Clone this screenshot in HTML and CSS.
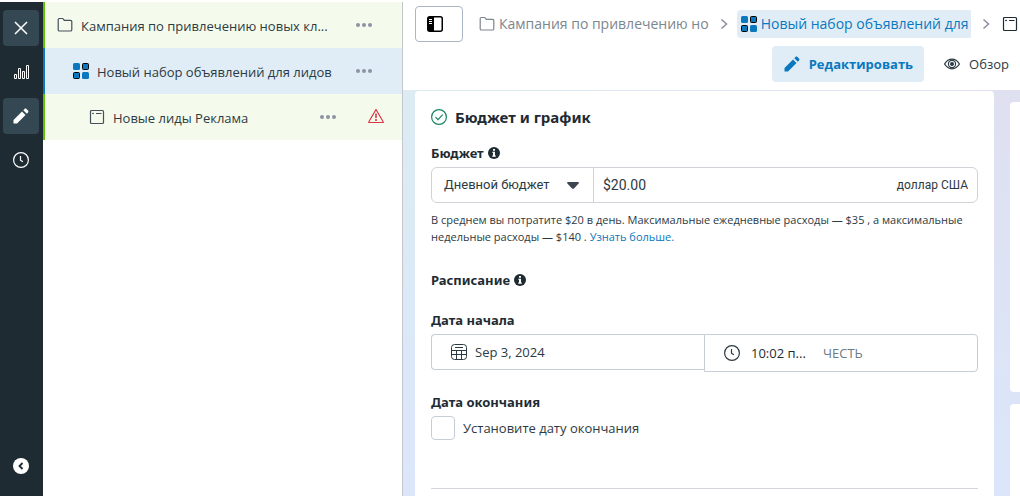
FILE: index.html
```html
<!DOCTYPE html>
<html lang="ru">
<head>
<meta charset="utf-8">
<meta name="viewport" content="width=device-width, initial-scale=1">
<title>Новый набор объявлений для лидов</title>
<link rel="stylesheet" href="styles.css">
</head>
<body>
<svg class="sprite" aria-hidden="true">
  <symbol id="folder" viewBox="0 0 16 16"><path d="M2 1.5h3.2c.5 0 .9.2 1.2.6l.9 1.2h6.2c.8 0 1.3.5 1.3 1.3v8.1c0 .8-.5 1.3-1.3 1.3h-11c-.8 0-1.3-.5-1.3-1.3V2.5c0-.6.4-1 1-1z" fill="none" stroke="currentColor" stroke-width="1.2"/></symbol>
  <symbol id="grid" viewBox="0 0 16 16"><rect x="0" y="0" width="7" height="7" rx="1.5" fill="#0a78be"/><rect x="9.5" y=".5" width="6" height="6" rx="1" fill="#0a78be" stroke="#000"/><rect x=".5" y="9.5" width="6" height="6" rx="1" fill="#0a78be" stroke="#000"/><rect x="9" y="9" width="7" height="7" rx="1.5" fill="#0a78be"/></symbol>
  <symbol id="window" viewBox="0 0 16 16"><rect x="1.5" y="1.5" width="13" height="13" rx="1" fill="none" stroke="currentColor" stroke-width="1.2"/><path d="M3.3 4.500h1.400M7 4.500h5.500M4 3.800v1.400" stroke="currentColor"/></symbol>
  <symbol id="pencil" viewBox="0 0 16 16"><path d="M.5 15.500v-3.500L9 3.500 12.500 7 4 15.500zM10.300 2.200l1.200-1.200c.6-.6 1.400-.6 2 0l1.500 1.500c.6.600.6 1.400 0 2l-1.200 1.200z" fill="currentColor"/></symbol>
  <symbol id="clock" viewBox="0 0 16 16"><circle cx="8" cy="8" r="7.400" fill="none" stroke="currentColor" stroke-width="1.200"/><path d="M7.500 4v4.200l2.400 1.500" fill="none" stroke="currentColor" stroke-width="1.200"/></symbol>
  <symbol id="chevron" viewBox="0 0 8 12"><path d="M1.500 1.500 6.500 6l-5 4.500" fill="none" stroke="currentColor" stroke-width="1.600"/></symbol>
  <symbol id="info" viewBox="0 0 12 12"><circle cx="6" cy="6" r="6" fill="currentColor"/><path d="M5 2h2v1.700H5zM4.300 4.700H7v3.800h.800v1.200H4.200V8.500H5V5.800h-.700z" fill="#fff"/></symbol>
  <symbol id="dots" viewBox="0 0 16 4"><circle cx="2" cy="2" r="2"/><circle cx="8" cy="2" r="2"/><circle cx="14" cy="2" r="2"/></symbol>
</svg>
<div class="app">
  <nav class="rail" aria-label="Разделы">
    <button class="rail-btn rail-btn-on" type="button" aria-label="Закрыть"><svg class="icon" viewBox="0 0 16 16"><path d="m2 2 12 12M14 2 2 14" stroke="currentColor" stroke-width="1.500"/></svg></button>
    <button class="rail-btn" type="button" aria-label="Графики"><svg class="icon" viewBox="0 0 16 16"><path d="M1.500 10.500h2v4h-2zM5.500 4.500h2v10h-2zM9.500 7.500h2v7h-2zM13.500 1.500h2v13h-2z" fill="none" stroke="currentColor"/></svg></button>
    <button class="rail-btn rail-btn-on" type="button" aria-label="Правка"><svg class="icon"><use href="#pencil"/></svg></button>
    <button class="rail-btn" type="button" aria-label="История"><svg class="icon"><use href="#clock"/></svg></button>
    <button class="rail-btn rail-last" type="button" aria-label="Свернуть"><svg class="icon" viewBox="0 0 16 16"><circle cx="8" cy="8" r="8" fill="#fff"/><path d="M9.500 5 6.500 8l3 3" fill="none" stroke="#1e2b33" stroke-width="1.800"/></svg></button>
  </nav>

  <aside class="tree">
    <div class="node">
      <svg class="icon"><use href="#folder"/></svg>
      <span class="node-name">Кампания по привлечению новых кл...</span>
      <button class="more" type="button" aria-label="Ещё"><svg class="dots"><use href="#dots"/></svg></button>
    </div>
    <div class="node node-2 node-on">
      <svg class="icon"><use href="#grid"/></svg>
      <span class="node-name">Новый набор объявлений для лидов</span>
      <button class="more" type="button" aria-label="Ещё"><svg class="dots"><use href="#dots"/></svg></button>
    </div>
    <div class="node node-3">
      <svg class="icon"><use href="#window"/></svg>
      <span class="node-name">Новые лиды Реклама</span>
      <button class="more" type="button" aria-label="Ещё"><svg class="dots"><use href="#dots"/></svg></button>
      <svg class="icon warn" viewBox="0 0 16 16"><path d="M8 1.500 15.300 14c.2.300 0 .500-.300.500H1c-.300 0-.500-.200-.300-.500z" fill="none" stroke="currentColor" stroke-width="1.200" stroke-linejoin="round"/><path d="M8 5.500v4.500M8 11v2" stroke="currentColor" stroke-width="1.600"/></svg>
    </div>
  </aside>

  <main class="main">
    <header class="head">
      <div class="crumbs">
        <button class="toggle" type="button" aria-label="Боковая панель"><svg class="icon" viewBox="0 0 16 16"><rect x=".75" y=".75" width="14.500" height="14.500" rx="2" fill="none" stroke="#000" stroke-width="1.500"/><path d="M1 1h6v14H1z"/><path d="M2 3.500h3M2 5.500h3M2 7.500h3" stroke="#fff"/></svg></button>
        <a class="crumb" href="#"><svg class="icon"><use href="#folder"/></svg>Кампания по привлечению но</a>
        <svg class="chev"><use href="#chevron"/></svg>
        <a class="crumb crumb-on" href="#"><svg class="icon"><use href="#grid"/></svg>Новый набор объявлений для</a>
        <svg class="chev"><use href="#chevron"/></svg>
        <a class="crumb crumb-end" href="#" aria-label="Реклама"><svg class="icon"><use href="#window"/></svg></a>
      </div>
      <div class="modes">
        <button class="mode mode-on" type="button"><svg class="icon"><use href="#pencil"/></svg>Редактировать</button>
        <button class="mode" type="button"><svg class="icon" viewBox="0 0 16 16"><path d="M.6 8C2.500 4.800 5 3.200 8 3.200S13.500 4.800 15.400 8C13.500 11.200 11 12.800 8 12.800S2.500 11.200.6 8z" fill="none" stroke="currentColor" stroke-width="1.300"/><circle cx="8" cy="8" r="3.600" fill="none" stroke="currentColor" stroke-width="1.200"/><circle cx="8" cy="8" r="2" fill="currentColor"/></svg>Обзор</button>
      </div>
    </header>

    <div class="canvas">
      <form class="card">
        <h2 class="title"><svg class="icon ok" viewBox="0 0 16 16"><circle cx="8" cy="8" r="7.400" fill="none" stroke="currentColor" stroke-width="1.200"/><path d="m4.500 8.200 2.500 2.500 4.700-5" fill="none" stroke="currentColor" stroke-width="1.200"/></svg>Бюджет и график</h2>

        <label class="label" for="budget">Бюджет <svg class="info"><use href="#info"/></svg></label>
        <div class="budget">
          <div class="pick">
            <select class="select" aria-label="Тип бюджета"><option>Дневной бюджет</option></select>
            <svg class="caret" viewBox="0 0 12 7"><path d="M1 0h10c1 0 1.200.8.600 1.400L7 6.400c-.6.600-1.400.600-2 0L.4 1.400C-.2.800 0 0 1 0z"/></svg>
          </div>
          <input class="amount" id="budget" type="text" value="$20.00">
          <span class="currency">доллар США</span>
        </div>
        <p class="hint">В среднем вы потратите $20 в день. Максимальные ежедневные расходы — <b>$35</b> , а максимальные недельные расходы — <b>$140</b> . <a class="link" href="#">Узнать больше.</a></p>

        <h3 class="label label-plan">Расписание <svg class="info"><use href="#info"/></svg></h3>

        <label class="label label-start" for="start">Дата начала</label>
        <div class="when">
          <div class="date">
            <svg class="icon" viewBox="0 0 16 16"><rect x=".5" y=".5" width="15" height="15" rx="3" fill="none" stroke="currentColor"/><path d="M4 3.500h8M.5 6.500h15M.5 10.500h15M5.500 6.500v9M10.500 6.500v9" stroke="currentColor"/></svg>
            <input class="entry" id="start" type="text" value="Sep 3, 2024">
          </div>
          <div class="time">
            <svg class="icon"><use href="#clock"/></svg>
            <input class="entry entry-time" type="text" aria-label="Время начала" value="10:02 п...">
            <span class="zone">ЧЕСТЬ</span>
          </div>
        </div>

        <h3 class="label label-end">Дата окончания</h3>
        <label class="check"><input class="box" type="checkbox">Установите дату окончания</label>
        <hr class="rule">
      </form>
      <aside class="side">
        <div class="side-card side-first"></div>
        <div class="side-card side-rest"></div>
      </aside>
    </div>
  </main>
</div>
</body>
</html>
```
FILE: styles.css
```css
* { box-sizing: border-box; }
body { margin: 0; background: #fff; color: #2c3a43; font: 13px/18px "Open Sans", "Noto Sans", sans-serif; overflow: hidden; }
button, input, select { font: inherit; color: inherit; margin: 0; padding: 0; border: 0; background: none; }
a { color: inherit; text-decoration: none; }
.sprite { position: absolute; width: 0; height: 0; }
.icon { width: 16px; height: 16px; flex: none; display: block; }
.app { display: flex; height: 100vh; padding-top: 2px; }

.rail { flex: none; width: 43px; background: #1e2b33; color: #fff; display: flex; flex-direction: column; align-items: center; gap: 8px; padding: 8px 1px 12px 0; }
.rail-btn { width: 36px; height: 36px; border-radius: 4px; display: grid; place-items: center; }
.rail-btn-on { background: #344854; }
.rail-last { margin-top: auto; }

.tree { flex: none; width: 360px; border-right: 1px solid #c4c7cc; }
.node { height: 46px; display: flex; align-items: center; gap: 8px; padding: 2px 30px 0 12px; border-left: 2px solid #63be09; background: #f5fbec; }
.node .icon { margin-bottom: 2px; color: #43515a; }
.node-2 { padding-left: 28px; }
.node-3 { padding-left: 44px; padding-right: 18px; }
.node-on { background: #e0edf7; border-color: #0a78be; }
.node-name { flex: 1; white-space: nowrap; }
.more { display: block; }
.dots { width: 16px; height: 4px; display: block; fill: #8d93a3; margin-bottom: 2px; }
.node .warn { color: #dc3545; margin-left: 24px; margin-bottom: 4px; }

.main { flex: 1; min-width: 0; display: flex; flex-direction: column; }
.head { flex: none; padding: 4px 0 8px 12px; height: 88px; }
.crumbs { display: flex; align-items: center; height: 36px; white-space: nowrap; overflow: hidden; }
.toggle { flex: none; width: 48px; height: 36px; border: 1px solid #a9b6c4; border-radius: 4px; padding-left: 11px; }
.crumb { display: flex; align-items: center; gap: 4px; height: 28px; flex: none; color: #7c868d; font-size: 14px; margin-left: 16px; }
.chev { width: 8px; height: 12px; flex: none; color: #8d93a3; margin-left: 11px; }
.crumb-on { background: #e0edf7; color: #0a78be; border-radius: 4px 0 0 4px; padding: 0 3px 0 4px; margin-left: 9px; }
.crumb-end { color: #1e2b33; margin-left: 12px; }
.modes { display: flex; justify-content: flex-end; gap: 8px; margin-top: 4px; }
.mode { display: flex; align-items: center; gap: 9px; height: 36px; padding: 0 11px 0 12px; border-radius: 4px; }
.mode-on { background: #e0edf7; color: #0a78be; font-weight: 700; }

.canvas { flex: 1; min-height: 0; display: flex; gap: 16px; padding: 1px 0 0 12px; background: linear-gradient(90deg, #dcecf2, #dfe0f0); background: linear-gradient(#dbe6fa00, #dbe6fa), linear-gradient(90deg, #dcecf2, #dfe0f0); }
.card { flex: 1; min-width: 0; background: #fff; border-radius: 4px 4px 0 0; padding: 15px 16px 0; }
.title { display: flex; align-items: center; gap: 8px; margin: 0; color: #1e2b33; font: 700 15px/22px "Noto Sans", sans-serif; }
.ok { color: #13855d; }
.label { display: flex; align-items: center; gap: 4px; margin: 16px 0 0; color: #1e2b33; font: 700 13px/18px "Noto Sans", sans-serif; }
.info { width: 12px; height: 12px; }
.budget { display: flex; align-items: center; height: 36px; margin-top: 5px; border: 1px solid #cfd2d6; border-radius: 6px; font: 14px/20px Roboto, sans-serif; }
.pick { flex: none; display: flex; align-items: center; width: 162px; height: 34px; padding: 0 14px 0 12px; border-right: 1px solid #cfd2d6; }
.select { appearance: none; flex: 1; min-width: 0; font-size: 13px; }
.caret { width: 12px; height: 7px; fill: #3c4550; }
.amount { flex: 1; min-width: 0; padding-left: 9px; }
.currency { padding-right: 9px; font-size: 12px; }
.hint { margin: 8px 0 0; font-size: 11px; line-height: 17px; }
.hint b { font-weight: 500; }
.link { color: #0a78be; }
.label-plan { margin-top: 26px; }
.label-start { margin-top: 22px; }
.when { display: flex; align-items: flex-start; margin-top: 5px; }
.date, .time { flex: 1; min-width: 0; display: flex; align-items: center; border: 1px solid #c6cdd6; }
.date { height: 36px; gap: 8px; padding-left: 19px; border-right: 0; border-radius: 4px 0 0 4px; }
.time { height: 38px; gap: 11px; padding-left: 19px; border-radius: 0 4px 4px 0; }
.entry { flex: 1; min-width: 0; }
.entry-time { flex: none; width: 61px; color: #1e2b33; }
.zone { color: #6c7a83; }
.label-end { margin-top: 21px; }
.check { display: flex; align-items: center; gap: 8px; margin-top: 5px; }
.box { appearance: none; width: 24px; height: 24px; border: 1px solid #c6cdd6; border-radius: 4px; }
.rule { margin: 48px 0 0; border: 0; border-top: 1px solid #d3d6da; }
.side { flex: none; width: 10px; display: flex; flex-direction: column; gap: 12px; padding-top: 11px; }
.side-card { background: #fff; border-radius: 4px 0 0 4px; }
.side-first { height: 290px; }
.side-rest { flex: 1; border-radius: 4px 0 0 0; }
```
